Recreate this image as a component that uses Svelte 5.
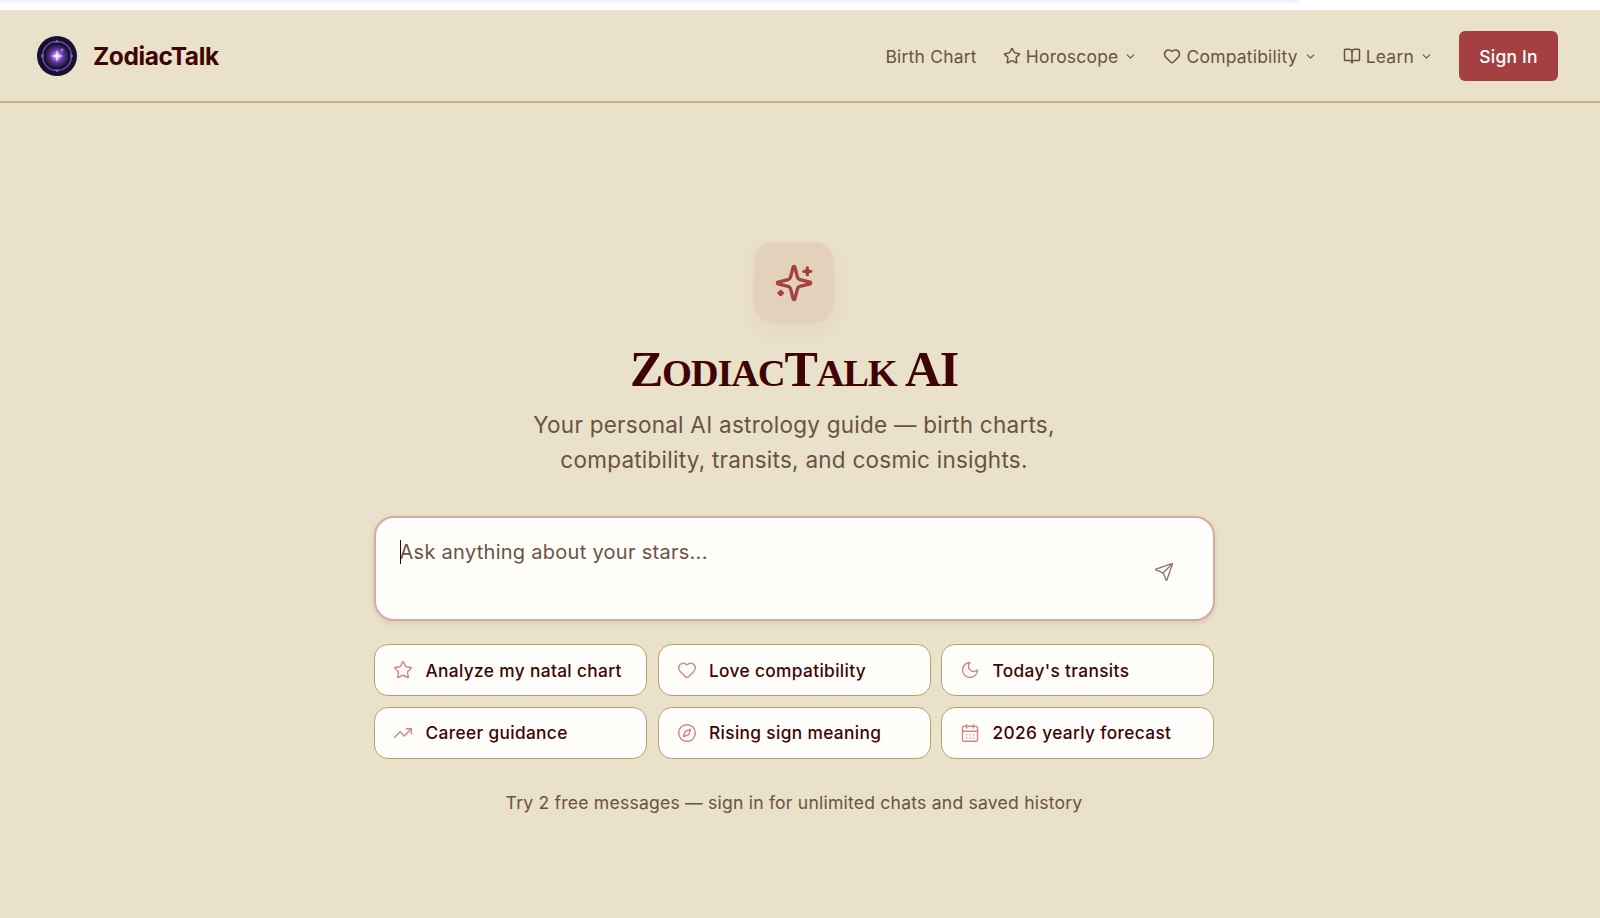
<script>
  const navItems = [
    { label: 'Horoscope', icon: 'star' },
    { label: 'Compatibility', icon: 'heart' },
    { label: 'Learn', icon: 'book' }
  ];
  const chips = [
    { label: 'Analyze my natal chart', icon: 'star' },
    { label: 'Love compatibility', icon: 'heart' },
    { label: "Today's transits", icon: 'moon' },
    { label: 'Career guidance', icon: 'trend' },
    { label: 'Rising sign meaning', icon: 'compass' },
    { label: '2026 yearly forecast', icon: 'calendar' }
  ];
</script>

{#snippet icon(name)}
  <svg class="ico" viewBox="0 0 24 24" fill="none" stroke="currentColor" stroke-width="2" stroke-linecap="round" stroke-linejoin="round">
    {#if name === 'star'}
      <path d="M11.525 2.295a.53.53 0 0 1 .95 0l2.31 4.679a2.123 2.123 0 0 0 1.595 1.16l5.166.756a.53.53 0 0 1 .294.904l-3.736 3.638a2.123 2.123 0 0 0-.611 1.878l.882 5.14a.53.53 0 0 1-.771.56l-4.618-2.428a2.122 2.122 0 0 0-1.973 0L6.396 21.01a.53.53 0 0 1-.77-.56l.881-5.139a2.122 2.122 0 0 0-.611-1.879L2.16 9.795a.53.53 0 0 1 .294-.906l5.165-.755a2.122 2.122 0 0 0 1.597-1.16z" />
    {:else if name === 'heart'}
      <path d="M2 9.5a5.5 5.5 0 0 1 9.591-3.676.56.56 0 0 0 .818 0A5.49 5.49 0 0 1 22 9.5c0 2.29-1.5 4-3 5.5l-5.492 5.313a2 2 0 0 1-3 .019L5 15c-1.5-1.5-3-3.2-3-5.5" />
    {:else if name === 'book'}
      <path d="M12 7v14" /><path d="M3 18a1 1 0 0 1-1-1V4a1 1 0 0 1 1-1h5a4 4 0 0 1 4 4 4 4 0 0 1 4-4h5a1 1 0 0 1 1 1v13a1 1 0 0 1-1 1h-6a3 3 0 0 0-3 3 3 3 0 0 0-3-3z" />
    {:else if name === 'moon'}
      <path d="M12 3a6 6 0 0 0 9 9 9 9 0 1 1-9-9Z" />
    {:else if name === 'trend'}
      <path d="M16 7h6v6" /><path d="m22 7-8.5 8.5-5-5L2 17" />
    {:else if name === 'compass'}
      <circle cx="12" cy="12" r="10" /><path d="m16.24 7.76-1.804 5.411a2 2 0 0 1-1.265 1.265L7.76 16.24l1.804-5.411a2 2 0 0 1 1.265-1.265z" />
    {:else if name === 'calendar'}
      <path d="M8 2v4" /><path d="M16 2v4" /><rect width="18" height="18" x="3" y="4" rx="2" /><path d="M3 10h18" /><path d="M8 14h.01" /><path d="M12 14h.01" /><path d="M16 14h.01" /><path d="M8 18h.01" /><path d="M12 18h.01" /><path d="M16 18h.01" />
    {:else if name === 'chevron'}
      <path d="m6 9 6 6 6-6" />
    {:else if name === 'sparkles'}
      <path d="M9.937 15.5A2 2 0 0 0 8.5 14.063l-6.135-1.582a.5.5 0 0 1 0-.962L8.5 9.936A2 2 0 0 0 9.937 8.5l1.582-6.135a.5.5 0 0 1 .963 0L14.063 8.5A2 2 0 0 0 15.5 9.937l6.135 1.581a.5.5 0 0 1 0 .964L15.5 14.063a2 2 0 0 0-1.437 1.437l-1.582 6.135a.5.5 0 0 1-.963 0z" /><path d="M20 3v4" /><path d="M22 5h-4" /><path d="M4 17v2" /><path d="M5 18H3" />
    {:else if name === 'send'}
      <path d="M14.536 21.686a.5.5 0 0 0 .937-.024l6.5-19a.496.496 0 0 0-.635-.635l-19 6.5a.5.5 0 0 0-.024.937l7.93 3.18a2 2 0 0 1 1.112 1.11z" /><path d="m21.854 2.147-10.94 10.939" />
    {/if}
  </svg>
{/snippet}

<div class="page">
  <div class="chrome"><div class="tab"></div></div>
  <header class="nav">
    <div class="brand">
      <svg class="logo" viewBox="0 0 40 40">
        <defs>
          <radialGradient id="glow">
            <stop offset="0" stop-color="#fff" />
            <stop offset="0.18" stop-color="#c9a0ff" />
            <stop offset="0.5" stop-color="#6a3aa8" />
            <stop offset="1" stop-color="#1c1436" />
          </radialGradient>
        </defs>
        <circle cx="20" cy="20" r="20" fill="#15122c" />
        <circle cx="20" cy="20" r="14.5" fill="none" stroke="#6b46a8" stroke-width="1.6" />
        <circle cx="20" cy="20" r="12" fill="url(#glow)" />
        <path d="M20 3.5l2.2 3h-4.4zM20 36.5l-2.2-3h4.4zM3.5 20l3-2.2v4.4zM36.5 20l-3 2.2v-4.4z" fill="#8a5fd0" />
        <circle cx="25" cy="14" r="1.5" fill="#a878e8" />
        <path d="M20 13.5l1.1 5.4 5.4 1.1-5.4 1.1-1.1 5.4-1.1-5.4-5.4-1.1 5.4-1.1z" fill="#f5ecff" />
      </svg>
      <span class="wordmark">ZodiacTalk</span>
    </div>
    <nav class="links">
      <span class="link">Birth Chart</span>
      {#each navItems as item}
        <span class="link">
          <span class="lead">{@render icon(item.icon)}</span>
          {item.label}
          <span class="chev">{@render icon('chevron')}</span>
        </span>
      {/each}
      <button class="signin">Sign In</button>
    </nav>
  </header>

  <main class="hero">
    <div class="badge">{@render icon('sparkles')}</div>
    <h1>Z<span class="lc">odiac</span>T<span class="lc">alk</span> AI</h1>
    <p class="sub">Your personal AI astrology guide — birth charts,<br />compatibility, transits, and cosmic insights.</p>
    <div class="box">
      <div class="ph"><span class="caret"></span>Ask anything about your stars...</div>
      <span class="send">{@render icon('send')}</span>
    </div>
    <div class="chips">
      {#each chips as chip}
        <button class="chip"><span class="chip-ico">{@render icon(chip.icon)}</span>{chip.label}</button>
      {/each}
    </div>
    <p class="foot">Try 2 free messages — sign in for unlimited chats and saved history</p>
  </main>
</div>

<style>
  :global(body) { margin: 0; background: #e9e1c9; }
  .page { height: 918px; overflow: hidden; font-family: Inter, "Liberation Sans", sans-serif; background: #e9e1c9; display: flex; flex-direction: column; }
  .chrome { height: 11px; box-sizing: border-box; background: #fff; flex: none; border-bottom: 1px solid #e6e4dc; }
  .tab { width: 1298px; height: 3px; background: #eff3fb; border-radius: 0 0 6px 0; }
  .nav { height: 90px; flex: none; display: flex; align-items: center; justify-content: space-between; padding: 0 42px 0 37px; border-bottom: 2px solid #c9b28a; }
  .brand { display: flex; align-items: center; gap: 16px; }
  .logo { width: 40px; height: 40px; display: block; }
  .wordmark { font-size: 24.5px; font-weight: 700; letter-spacing: -0.4px; color: #3f0303; }
  .links { display: flex; align-items: center; font-size: 17.5px; color: #6b5242; letter-spacing: 0.2px; }
  .link { display: flex; align-items: center; margin-right: 26px; white-space: nowrap; }
  .lead { width: 18px; height: 18px; display: block; margin-right: 5px; }
  .chev { width: 13px; height: 13px; display: block; margin-left: 6px; }
  .ico { width: 100%; height: 100%; display: block; }
  .signin { width: 99px; height: 50px; border: none; border-radius: 6px; background: #a54042; color: #fff; font: 500 17.5px Inter, sans-serif; letter-spacing: 0.2px; padding: 0; }
  .hero { display: flex; flex-direction: column; align-items: center; padding: 139px 12px 0 0; }
  .badge { width: 80px; height: 81px; border-radius: 20px; background: #e4d1bc; color: #a54042; box-shadow: 0 8px 20px rgba(165, 64, 66, 0.06); display: flex; align-items: center; justify-content: center; }
  .badge :global(svg) { width: 40px; height: 40px; }
  h1 { margin: 17px 0 0; font-family: "Liberation Serif", serif; font-weight: 700; font-size: 50px; line-height: 58px; color: #3f0303; letter-spacing: -1.2px; text-transform: uppercase; }
  .lc { font-size: 0.77em; }
  .sub { margin: 5px 0 0; font-size: 22.5px; line-height: 35px; text-align: center; color: #6b5242; letter-spacing: 0.25px; }
  .box { width: 841px; height: 105px; box-sizing: border-box; margin-top: 39px; background: #fffefa; border: 2.5px solid #d8a8a4; border-radius: 20px; position: relative; padding: 20px 24px; box-shadow: 0 2px 5px rgba(90, 40, 30, 0.12); }
  .ph { font-size: 20px; line-height: 28px; color: #6b5242; letter-spacing: 0.28px; position: relative; }
  .caret { position: absolute; left: 0; top: 2px; width: 1.5px; height: 24px; background: #3f0303; }
  .send { position: absolute; right: 39px; top: 44px; width: 20px; height: 20px; color: #8f7270; }
  .send :global(svg) { stroke-width: 1.6; }
  .chips { width: 840px; display: grid; grid-template-columns: repeat(3, 1fr); gap: 10.5px; margin-top: 23px; }
  .chip { height: 52px; box-sizing: border-box; display: flex; align-items: center; gap: 12.5px; padding: 0 18px; background: #fffefa; border: 1.5px solid #b8a074; border-radius: 14px; color: #3f0303; font: 500 17.3px Inter, sans-serif; letter-spacing: 0.35px; white-space: nowrap; }
  .chip-ico { width: 20px; height: 20px; color: #cf8a88; flex: none; }
  .chip-ico :global(svg) { stroke-width: 1.75; }
  .foot { margin: 31px 0 0; font-size: 17.6px; line-height: 26px; color: #6b5242; letter-spacing: 0.2px; }
</style>
